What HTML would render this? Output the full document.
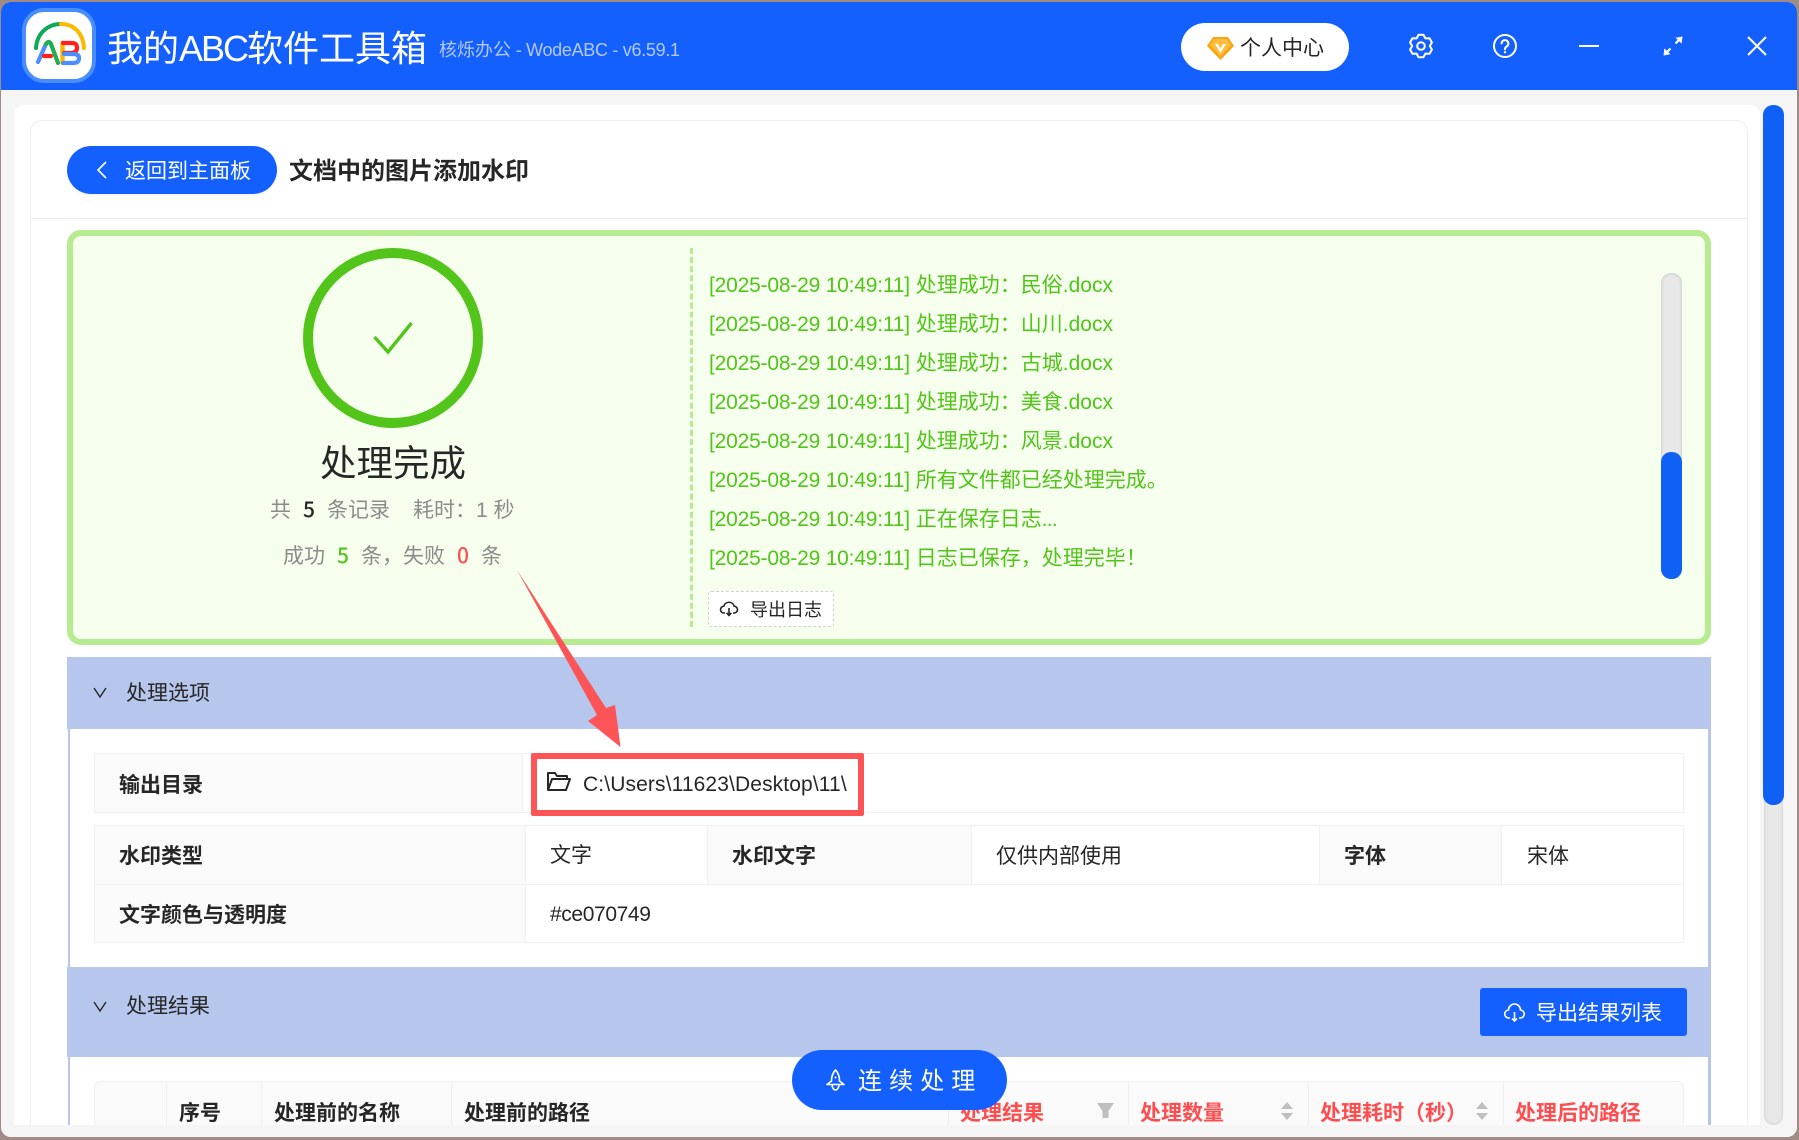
<!DOCTYPE html>
<html lang="zh"><head><meta charset="utf-8"><title>我的ABC软件工具箱</title>
<style>
html,body{margin:0;padding:0;width:1799px;height:1140px;overflow:hidden;background:#a08b85}
body{position:relative;font-family:"Liberation Sans","Noto Sans CJK SC",sans-serif;color:#262626}
div,span.a,svg{position:absolute}
svg{overflow:visible}
.t{position:absolute;white-space:nowrap;line-height:30px;height:30px;font-size:21px}
.b{font-weight:700}
.m{font-family:"Noto Sans CJK SC",sans-serif;font-weight:500}
.log{position:absolute;left:709px;white-space:nowrap;line-height:30px;font-size:21px;color:#52c41a}
.log i{font-style:normal;letter-spacing:-.2px}
.g{color:#8c8c8c}
.c{box-sizing:border-box;background:#fff;border:1px solid #f0f0f0}
.l{background:#fafafa}
.r{color:#ff4d4f;font-weight:700}
.th{position:absolute;top:1083px;height:50px;width:1px;background:#f0f0f0}
</style></head><body>
<div id="win" style="left:1px;top:2px;width:1796px;height:1135px;background:#f5f5f5;border-radius:10px;overflow:hidden">
<div style="left:0;top:0;width:1796px;height:88px;background:#1460ff"></div>
</div>

<!-- logo -->
<div style="left:22px;top:8px;width:74px;height:75px;box-sizing:border-box;background:#fff;border:4px solid #4a8dff;border-radius:22px"></div>
<svg style="left:0;top:0" width="110" height="90" fill="none" stroke-linecap="round">
<path d="M36 48C37 33 48 24 61 24" stroke="#0fa958" stroke-width="4"/>
<path d="M61 24C74 24 83 33 84 48" stroke="#ffb800" stroke-width="4"/>
<path d="M38 62L46 44" stroke="#4c8dff" stroke-width="4.2"/>
<path d="M46 44Q49 40 51 44L58 63" stroke="#1fae4f" stroke-width="4.2"/>
<path d="M44 56H51" stroke="#ff1f1f" stroke-width="4.2"/>
<path d="M62.5 43V63" stroke="#ffb800" stroke-width="4.4"/>
<path d="M63 43H72Q77 43 77 48Q77 52 72 53H64" stroke="#ff1f1f" stroke-width="4.2"/>
<path d="M64 54H73Q79 54 79 58Q79 63 73 63H63" stroke="#4c8dff" stroke-width="4.2"/>
</svg>

<div class="t" style="left:107px;top:29px;height:40px;line-height:40px;font-size:36px;color:#fff">我的<span style="letter-spacing:-2px">ABC</span>软件工具箱</div>
<div class="t" style="left:439px;top:35px;font-size:18px;color:#b3c8ff">核烁办公<span style="letter-spacing:-.3px"> - WodeABC - v6.59.1</span></div>

<div style="left:1181px;top:23px;width:168px;height:48px;background:#fff;border-radius:24px"></div>
<svg style="left:1207px;top:37px" width="27" height="23" viewBox="0 0 27 23">
<path d="M6 0H21L27 9L13.5 23L0 9Z" fill="#faa514"/>
<path d="M7 2H20L24 8L13.5 19.5L3 8Z" fill="#ffbe3d"/>
<path d="M8 7H11L13.5 11.5L16 7H19L13.5 16Z" fill="#fff"/>
</svg>
<div class="t" style="left:1240px;top:34px">个人中心</div>

<svg style="left:1421px;top:46px" width="1" height="1" fill="none" stroke="#fff" stroke-width="2" stroke-linejoin="round">
<path d="M-2.39 -11.25L2.39 -11.25L4.4 -7.62L8.55 -7.69L10.94 -3.55L8.8 0L10.94 3.55L8.55 7.69L4.4 7.62L2.39 11.25L-2.39 11.25L-4.4 7.62L-8.55 7.69L-10.94 3.55L-8.8 0L-10.94 -3.55L-8.55 -7.69L-4.4 -7.62Z"/>
<circle r="3.8"/>
</svg>
<svg style="left:1505px;top:46px" width="1" height="1" fill="none" stroke="#fff" stroke-width="2">
<circle r="11"/>
<path d="M-3.4 -2.6A3.4 3.4 0 1 1 1.8 .4C.5 1.2 0 1.8 0 3.2" stroke-linecap="round"/>
<circle cy="6.2" r="1.2" fill="#fff" stroke="none"/>
</svg>
<div style="left:1579px;top:45px;width:20px;height:2px;background:#fff"></div>
<svg style="left:1673px;top:46px" width="1" height="1" fill="#fff" stroke="none">
<path d="M2.5 -2.5L6 -6" stroke="#fff" stroke-width="2.2"/>
<path d="M9.5 -9.5L8.6 -2.4L2.6 -8.2Z"/>
<path d="M-2.5 2.5L-6 6" stroke="#fff" stroke-width="2.2"/>
<path d="M-9.5 9.5L-8.6 2.4L-2.6 8.2Z"/>
</svg>
<svg style="left:1757px;top:46px" width="1" height="1" fill="none" stroke="#fff" stroke-width="2">
<path d="M-9 -9L9 9M9 -9L-9 9"/>
</svg>

<!-- main card -->
<div style="left:14px;top:105px;width:1746px;height:1020px;background:#fff;border-radius:10px 10px 0 0"></div>
<div style="left:30px;top:120px;width:1718px;height:1010px;box-sizing:border-box;border:1px solid #eee;border-bottom:0;border-radius:12px 12px 0 0"></div>
<div style="left:30px;top:218px;width:1718px;height:1px;background:#eee"></div>

<div style="left:67px;top:146px;width:210px;height:48px;background:#1460ff;border-radius:24px;box-shadow:0 2px 0 rgba(0,0,0,.03)"></div>
<svg style="left:95px;top:161px" width="14" height="18" fill="none" stroke="#fff" stroke-width="1.6"><path d="M11 1L3 9L11 17"/></svg>
<div class="t" style="left:125px;top:157px;color:#fff">返回到主面板</div>
<div class="t b" style="left:289px;top:157px;font-size:24px">文档中的图片添加水印</div>

<!-- status box -->
<div style="left:67px;top:230px;width:1644px;height:415px;box-sizing:border-box;background:#f6ffed;border:6px solid #b7eb8f;border-radius:14px"></div>
<svg style="left:303px;top:248px" width="180" height="180" fill="none" stroke="#52c41a">
<circle cx="90" cy="90" r="85" stroke-width="10"/>
<path d="M71.5 89L85 104L108.5 75" stroke-width="3.4"/>
</svg>
<div class="t" style="left:320px;top:444px;height:40px;line-height:40px;font-size:36.5px">处理完成</div>
<div class="t g" style="left:270px;top:494px">共<span class="m" style="color:#262626;margin:0 12px">5</span>条记录<span style="margin-left:23px">耗时：1 秒</span></div>
<div class="t g" style="left:283px;top:540px">成功<span class="m" style="color:#52c41a;margin:0 12px">5</span>条，失败<span class="m" style="color:#ff4d4f;margin:0 12px">0</span>条</div>
<div style="left:690px;top:248px;width:0;height:379px;border-left:3px dashed #b7eb8f"></div>

<div class="log" style="top:271px"><i>[2025-08-29 10:49:11]</i> 处理成功：民俗.docx</div>
<div class="log" style="top:310px"><i>[2025-08-29 10:49:11]</i> 处理成功：山川.docx</div>
<div class="log" style="top:349px"><i>[2025-08-29 10:49:11]</i> 处理成功：古城.docx</div>
<div class="log" style="top:388px"><i>[2025-08-29 10:49:11]</i> 处理成功：美食.docx</div>
<div class="log" style="top:427px"><i>[2025-08-29 10:49:11]</i> 处理成功：风景.docx</div>
<div class="log" style="top:466px"><i>[2025-08-29 10:49:11]</i> 所有文件都已经处理完成。</div>
<div class="log" style="top:505px"><i>[2025-08-29 10:49:11]</i> 正在保存日志<span style="letter-spacing:-.8px">...</span></div>
<div class="log" style="top:544px"><i>[2025-08-29 10:49:11]</i> 日志已保存，处理完毕！</div>

<div style="left:708px;top:591px;width:126px;height:36px;box-sizing:border-box;background:#fff;border:1px dashed #d0d0d0;border-radius:3px"></div>
<svg style="left:720px;top:601px" width="18" height="16" viewBox="0 0 18 16" fill="none" stroke="#262626" stroke-width="1.6">
<path d="M5 12H4A3.4 3.4 0 0 1 3.8 5.2A5.4 5.4 0 0 1 14.2 5.2A3.4 3.4 0 0 1 14 12H13"/>
<path d="M9 7V14M6.6 11.8L9 14.4L11.4 11.8"/>
</svg>
<div class="t" style="left:750px;top:595px;font-size:18px">导出日志</div>

<div style="left:1661px;top:273px;width:21px;height:306px;background:#e8e8e8;border-radius:10px;box-shadow:inset 0 0 3px rgba(0,0,0,.18)"></div>
<div style="left:1661px;top:452px;width:21px;height:127px;background:#1060f5;border-radius:10px"></div>

<!-- section 1 -->
<div style="left:67px;top:657px;width:1644px;height:72px;background:#b6c6ec"></div>
<div style="left:68px;top:729px;width:2px;height:238px;background:#b6c6ec"></div>
<div style="left:1708px;top:729px;width:3px;height:238px;background:#b6c6ec"></div>
<svg style="left:93px;top:687px" width="14" height="11" fill="none" stroke="#262626" stroke-width="1.4"><path d="M1 1L7 10L13 1"/></svg>
<div class="t" style="left:126px;top:679px">处理选项</div>

<div class="c l" style="left:94px;top:753px;width:429px;height:60px"></div>
<div class="c" style="left:522px;top:753px;width:1162px;height:60px"></div>
<div class="t b" style="left:119px;top:771px">输出目录</div>
<svg style="left:547px;top:772px" width="24" height="19" viewBox="0 0 24 19" fill="none" stroke="#262626" stroke-width="2" stroke-linejoin="round">
<path d="M1 18V1H8L10 4H20V7"/><path d="M1 18L5 7H23L19 18Z"/>
</svg>
<div class="t" style="left:583px;top:770px;letter-spacing:.12px">C:\Users\11623\Desktop\11\</div>

<div class="c l" style="left:94px;top:825px;width:432px;height:60px"></div>
<div class="c" style="left:525px;top:825px;width:183px;height:60px"></div>
<div class="c l" style="left:707px;top:825px;width:265px;height:60px"></div>
<div class="c" style="left:971px;top:825px;width:349px;height:60px"></div>
<div class="c l" style="left:1319px;top:825px;width:183px;height:60px"></div>
<div class="c" style="left:1501px;top:825px;width:183px;height:60px"></div>
<div class="c l" style="left:94px;top:884px;width:432px;height:59px"></div>
<div class="c" style="left:525px;top:884px;width:1159px;height:59px"></div>
<div class="t b" style="left:119px;top:842px">水印类型</div>
<div class="t" style="left:550px;top:841px">文字</div>
<div class="t b" style="left:732px;top:842px">水印文字</div>
<div class="t" style="left:996px;top:842px">仅供内部使用</div>
<div class="t b" style="left:1344px;top:842px">字体</div>
<div class="t" style="left:1527px;top:842px">宋体</div>
<div class="t b" style="left:119px;top:901px">文字颜色与透明度</div>
<div class="t" style="left:550px;top:900px;letter-spacing:-.38px">#ce070749</div>

<!-- section 2 -->
<div style="left:67px;top:967px;width:1644px;height:90px;background:#b6c6ec"></div>
<div style="left:68px;top:1057px;width:2px;height:68px;background:#b6c6ec"></div>
<div style="left:1708px;top:1057px;width:3px;height:68px;background:#b6c6ec"></div>
<svg style="left:93px;top:1001px" width="14" height="11" fill="none" stroke="#262626" stroke-width="1.4"><path d="M1 1L7 10L13 1"/></svg>
<div class="t" style="left:126px;top:992px">处理结果</div>
<div style="left:1480px;top:988px;width:207px;height:48px;background:#1460ff;border-radius:3px"></div>
<svg style="left:1504px;top:1004px" width="21" height="18" viewBox="0 0 21 18" fill="none" stroke="#fff" stroke-width="1.6">
<path d="M6 14H5A4 4 0 0 1 4.5 6A6 6 0 0 1 16.500 6A4 4 0 0 1 16 14H15"/>
<path d="M10.500 8V17M8 14.500L10.500 17L13 14.500"/>
</svg>
<div class="t" style="left:1536px;top:999px;color:#fff">导出结果列表</div>

<!-- results table -->
<div style="left:94px;top:1081px;width:1590px;height:50px;box-sizing:border-box;background:#fafafa;border:1px solid #f0f0f0;border-radius:6px 6px 0 0"></div>
<div class="th" style="left:166px"></div><div class="th" style="left:261px"></div><div class="th" style="left:451px"></div><div class="th" style="left:948px"></div><div class="th" style="left:1128px"></div><div class="th" style="left:1308px"></div><div class="th" style="left:1503px"></div>
<div class="t b" style="left:179px;top:1099px">序号</div>
<div class="t b" style="left:274px;top:1099px">处理前的名称</div>
<div class="t b" style="left:464px;top:1099px">处理前的路径</div>
<div class="t r" style="left:960px;top:1099px">处理结果</div>
<div class="t r" style="left:1140px;top:1099px">处理数量</div>
<div class="t r" style="left:1320px;top:1099px">处理耗时（秒）</div>
<div class="t r" style="left:1515px;top:1099px">处理后的路径</div>
<svg style="left:1097px;top:1103px" width="17" height="15" fill="#bfbfbf"><path d="M0 0H17L11.500 8V15H5.500V8Z"/></svg>
<svg style="left:1280px;top:1102px" width="14" height="18" fill="#bfbfbf"><path d="M7 0L13 7H1ZM1 11H13L7 18Z"/></svg>
<svg style="left:1475px;top:1102px" width="14" height="18" fill="#bfbfbf"><path d="M7 0L13 7H1ZM1 11H13L7 18Z"/></svg>

<!-- bottom bar and edges -->
<div style="left:1px;top:1125px;width:1796px;height:12px;background:#f5f5f5;border-radius:0 0 10px 10px"></div>
<div style="left:1764px;top:105px;width:19px;height:1020px;background:#e8e8e8;border-radius:10px;box-shadow:inset 0 0 3px rgba(0,0,0,.15)"></div>
<div style="left:1763px;top:105px;width:21px;height:700px;background:#1060f5;border-radius:10px"></div>

<!-- float button -->
<div style="left:792px;top:1050px;width:215px;height:60px;background:#1460ff;border-radius:30px"></div>
<svg style="left:825px;top:1069px" width="21" height="22" viewBox="0 0 21 22" fill="none" stroke="#fff" stroke-width="1.6" stroke-linejoin="round">
<path d="M10.500 1C7.500 4 6.500 8 6.500 12L2 15.500H19L14.500 12C14.500 8 13.500 4 10.500 1Z"/>
<path d="M7 15.500C7 19 9 21 10.500 21C12 21 14 19 14 15.500"/>
<circle cx="10.500" cy="8.500" r="1" fill="#fff" stroke="none"/>
</svg>
<div class="t" style="left:858px;top:1067px;font-size:24px;letter-spacing:7.100px;color:#fff">连续处理</div>

<!-- annotations -->
<div style="left:531px;top:753px;width:333px;height:63px;box-sizing:border-box;border:6px solid #fd5457;border-radius:2px"></div>
<svg style="left:0;top:0" width="1799" height="1140" fill="#fd5457"><path d="M517 570L606 708L615 705L620.500 747L588 721L597 715Z"/></svg>
</body></html>
